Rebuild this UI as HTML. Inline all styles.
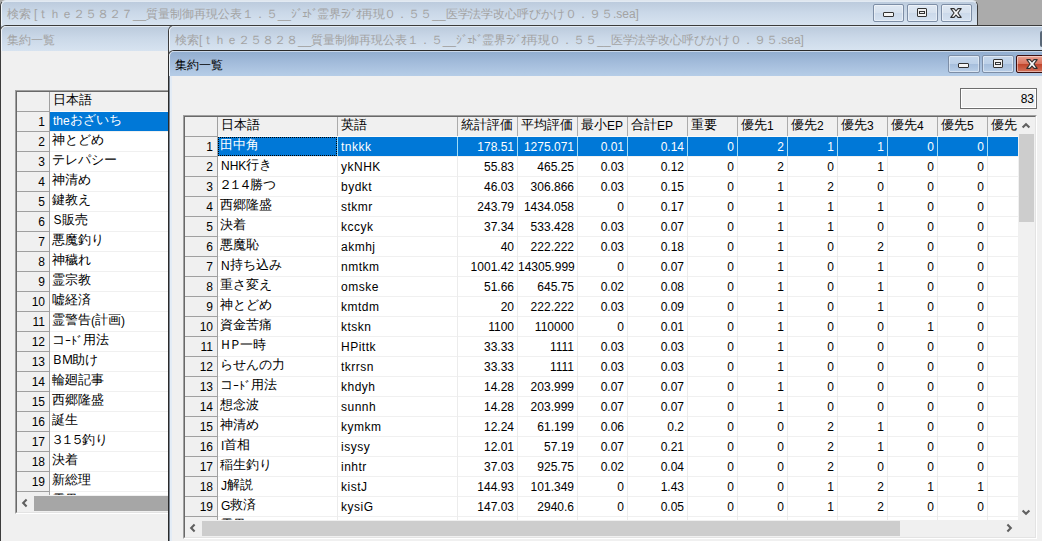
<!DOCTYPE html><html lang="ja"><head><meta charset="utf-8"><style>
*{box-sizing:border-box;margin:0;padding:0}
html,body{width:1042px;height:541px;overflow:hidden;background:#ababab;font-family:"Liberation Sans",sans-serif;font-size:12px;color:#000}
.a{position:absolute}
.tb-in{background:linear-gradient(#bccbdd,#cad8e8 45%,#d7e3f0);border-top:1px solid #e2eaf3}
.tb-act{background:linear-gradient(#92aed0,#a3bcdb 45%,#b6cde7);border-top:1px solid #c9d8ea}
.ttl{position:absolute;white-space:nowrap;font-size:12px;line-height:14px;letter-spacing:-0.04px}
.btn{position:absolute;border:1px solid #7d8ea6;border-radius:2px;box-shadow:inset 0 0 0 1px rgba(255,255,255,.45)}
.bi{background:linear-gradient(#dfe8f3,#d6e1ee 50%,#cbd9ea 51%,#d5e2f1)}
.ba{background:linear-gradient(#c5d7ec,#bcd0e8 50%,#a6bedc 51%,#b9cfe8)}
.bc{background:linear-gradient(#e8a090,#d8735e 50%,#c0442b 51%,#d2735c);border-color:#3c0f0f}
.c{position:absolute;white-space:nowrap;overflow:hidden;height:19px;line-height:19px;padding:0 2px 0 2px}
.r{text-align:right;padding:0 3px 0 0}
.rh{text-align:right;padding:1px 4px 0 0}
.vl{position:absolute;width:1px}
.hk{letter-spacing:-1.4px}
.fw{letter-spacing:-1.5px;margin-left:-1.5px}
.j{font-size:13px;line-height:0;position:relative;top:-1px;font-weight:500}
.hl{position:absolute;height:1px}
</style></head><body><div class="a" style="left:0;top:0;width:978px;height:541px;background:#dae6f3;border:1px solid #3c3c3c;border-top-color:#dfe6ee;border-radius:6px 6px 0 0"></div><div class="a tb-in" style="left:1px;top:1px;width:976px;height:24px;border-radius:5px 5px 0 0;border-left:1px solid #f2f6fb"></div><div class="ttl" style="left:7px;top:7px;color:#a3a3a3">検索<span style="margin-left:3px">[</span>ｔｈｅ２５８２７__質量制御再現公表１．５__<span class=hk>ｼﾞｪﾄﾞ</span>霊界<span class=hk>ﾗｼﾞｵ</span>再現０．５５__医学法学改心呼びかけ０．９５.sea]</div><div class="btn bi" style="left:873px;top:4px;width:31px;height:18px"></div><div class="a" style="left:883px;top:12px;width:11px;height:5px;background:#f4f4f4;border:1px solid #333;border-radius:1px"></div><div class="btn bi" style="left:907px;top:4px;width:31px;height:18px"></div><div class="a" style="left:917px;top:8px;width:10px;height:9px;background:#f0f0f0;border:1px solid #333;border-radius:1px"></div><div class="a" style="left:919px;top:11px;width:6px;height:3px;border:1px solid #333"></div><div class="btn bi" style="left:941px;top:4px;width:31px;height:18px"></div><svg class="a" style="left:949px;top:7px" width="14" height="12" viewBox="0 0 14 12"><path d="M1.8 1.6 L5 1.6 L7 4 L9 1.6 L12.2 1.6 L8.9 6 L12.2 10.4 L9 10.4 L7 8 L5 10.4 L1.8 10.4 L5.1 6 Z" fill="#f8f8f8" stroke="#2e2e2e" stroke-width="1.1" stroke-linejoin="round"/></svg><div class="a" style="left:0;top:25px;width:180px;height:516px;background:#f0f0f0;border-top:1px solid #3c3c3c;border-left:1px solid #3c3c3c;border-radius:6px 0 0 0"></div><div class="a tb-in" style="left:1px;top:26px;width:179px;height:25px;border-radius:5px 0 0 0;border-left:1px solid #f2f6fb"></div><div class="ttl" style="left:7px;top:33px;color:#a3a3a3">集約一覧</div><div class="a" style="left:15px;top:90px;width:200px;height:424px;border-top:1px solid #a0a0a0;border-left:1px solid #a0a0a0;border-right:1px solid #fff;border-bottom:1px solid #fff"></div><div class="a" style="left:16px;top:91px;width:198px;height:422px;border-top:1px solid #696969;border-left:1px solid #696969;border-right:1px solid #e3e3e3;border-bottom:1px solid #e3e3e3;background:#f0f0f0"></div><div class="a" style="left:17px;top:92px;width:196px;height:403px;overflow:hidden;background:#fff"><div class="a" style="left:0;top:0;width:196px;height:19px;background:#f0f0f0"></div><div class="a" style="left:0;top:0;width:32px;height:403px;background:#f0f0f0"></div><div class="a" style="left:33px;top:20px;width:163px;height:19px;background:#0078d7"></div><div class="hl" style="left:33px;top:19px;width:163px;background:#fafafa"></div><div class="hl" style="left:0;top:19px;width:33px;background:#a0a0a0"></div><div class="hl" style="left:33px;top:39px;width:163px;background:#f0f0f0"></div><div class="hl" style="left:0;top:39px;width:33px;background:#a0a0a0"></div><div class="hl" style="left:33px;top:59px;width:163px;background:#f0f0f0"></div><div class="hl" style="left:0;top:59px;width:33px;background:#a0a0a0"></div><div class="hl" style="left:33px;top:79px;width:163px;background:#f0f0f0"></div><div class="hl" style="left:0;top:79px;width:33px;background:#a0a0a0"></div><div class="hl" style="left:33px;top:99px;width:163px;background:#f0f0f0"></div><div class="hl" style="left:0;top:99px;width:33px;background:#a0a0a0"></div><div class="hl" style="left:33px;top:119px;width:163px;background:#f0f0f0"></div><div class="hl" style="left:0;top:119px;width:33px;background:#a0a0a0"></div><div class="hl" style="left:33px;top:139px;width:163px;background:#f0f0f0"></div><div class="hl" style="left:0;top:139px;width:33px;background:#a0a0a0"></div><div class="hl" style="left:33px;top:159px;width:163px;background:#f0f0f0"></div><div class="hl" style="left:0;top:159px;width:33px;background:#a0a0a0"></div><div class="hl" style="left:33px;top:179px;width:163px;background:#f0f0f0"></div><div class="hl" style="left:0;top:179px;width:33px;background:#a0a0a0"></div><div class="hl" style="left:33px;top:199px;width:163px;background:#f0f0f0"></div><div class="hl" style="left:0;top:199px;width:33px;background:#a0a0a0"></div><div class="hl" style="left:33px;top:219px;width:163px;background:#f0f0f0"></div><div class="hl" style="left:0;top:219px;width:33px;background:#a0a0a0"></div><div class="hl" style="left:33px;top:239px;width:163px;background:#f0f0f0"></div><div class="hl" style="left:0;top:239px;width:33px;background:#a0a0a0"></div><div class="hl" style="left:33px;top:259px;width:163px;background:#f0f0f0"></div><div class="hl" style="left:0;top:259px;width:33px;background:#a0a0a0"></div><div class="hl" style="left:33px;top:279px;width:163px;background:#f0f0f0"></div><div class="hl" style="left:0;top:279px;width:33px;background:#a0a0a0"></div><div class="hl" style="left:33px;top:299px;width:163px;background:#f0f0f0"></div><div class="hl" style="left:0;top:299px;width:33px;background:#a0a0a0"></div><div class="hl" style="left:33px;top:319px;width:163px;background:#f0f0f0"></div><div class="hl" style="left:0;top:319px;width:33px;background:#a0a0a0"></div><div class="hl" style="left:33px;top:339px;width:163px;background:#f0f0f0"></div><div class="hl" style="left:0;top:339px;width:33px;background:#a0a0a0"></div><div class="hl" style="left:33px;top:359px;width:163px;background:#f0f0f0"></div><div class="hl" style="left:0;top:359px;width:33px;background:#a0a0a0"></div><div class="hl" style="left:33px;top:379px;width:163px;background:#f0f0f0"></div><div class="hl" style="left:0;top:379px;width:33px;background:#a0a0a0"></div><div class="hl" style="left:33px;top:399px;width:163px;background:#f0f0f0"></div><div class="hl" style="left:0;top:399px;width:33px;background:#a0a0a0"></div><div class="hl" style="left:33px;top:419px;width:163px;background:#f0f0f0"></div><div class="hl" style="left:0;top:419px;width:33px;background:#a0a0a0"></div><div class="hl" style="left:33px;top:439px;width:163px;background:#f0f0f0"></div><div class="hl" style="left:0;top:439px;width:33px;background:#a0a0a0"></div><div class="vl" style="left:32px;top:0;height:403px;background:#a0a0a0"></div><div class="c" style="left:33px;top:0;width:362px;padding-left:3px"><span class="j">日本語</span></div><div class="c rh" style="left:0;top:20px;width:32px">1</div><div class="c" style="left:33px;top:20px;width:362px;color:#fff;padding-left:3px;">the<span class="j">おざいち</span></div><div class="c rh" style="left:0;top:40px;width:32px">2</div><div class="c" style="left:33px;top:40px;width:362px;color:#000;"><span class="j">神とどめ</span></div><div class="c rh" style="left:0;top:60px;width:32px">3</div><div class="c" style="left:33px;top:60px;width:362px;color:#000;"><span class="j">テレパシー</span></div><div class="c rh" style="left:0;top:80px;width:32px">4</div><div class="c" style="left:33px;top:80px;width:362px;color:#000;"><span class="j">神清め</span></div><div class="c rh" style="left:0;top:100px;width:32px">5</div><div class="c" style="left:33px;top:100px;width:362px;color:#000;"><span class="j">鍵教え</span></div><div class="c rh" style="left:0;top:120px;width:32px">6</div><div class="c" style="left:33px;top:120px;width:362px;color:#000;"><span class="j fw">Ｓ</span><span class="j">販売</span></div><div class="c rh" style="left:0;top:140px;width:32px">7</div><div class="c" style="left:33px;top:140px;width:362px;color:#000;"><span class="j">悪魔釣り</span></div><div class="c rh" style="left:0;top:160px;width:32px">8</div><div class="c" style="left:33px;top:160px;width:362px;color:#000;"><span class="j">神穢れ</span></div><div class="c rh" style="left:0;top:180px;width:32px">9</div><div class="c" style="left:33px;top:180px;width:362px;color:#000;"><span class="j">霊宗教</span></div><div class="c rh" style="left:0;top:200px;width:32px">10</div><div class="c" style="left:33px;top:200px;width:362px;color:#000;"><span class="j">嘘経済</span></div><div class="c rh" style="left:0;top:220px;width:32px">11</div><div class="c" style="left:33px;top:220px;width:362px;color:#000;"><span class="j">霊警告</span>(<span class="j">計画</span>)</div><div class="c rh" style="left:0;top:240px;width:32px">12</div><div class="c" style="left:33px;top:240px;width:362px;color:#000;"><span class="j">コ</span>ｰﾄﾞ<span class="j">用法</span></div><div class="c rh" style="left:0;top:260px;width:32px">13</div><div class="c" style="left:33px;top:260px;width:362px;color:#000;"><span class="j fw">Ｂ</span><span class="j fw">Ｍ</span><span class="j">助け</span></div><div class="c rh" style="left:0;top:280px;width:32px">14</div><div class="c" style="left:33px;top:280px;width:362px;color:#000;"><span class="j">輪廻記事</span></div><div class="c rh" style="left:0;top:300px;width:32px">15</div><div class="c" style="left:33px;top:300px;width:362px;color:#000;"><span class="j">西郷隆盛</span></div><div class="c rh" style="left:0;top:320px;width:32px">16</div><div class="c" style="left:33px;top:320px;width:362px;color:#000;"><span class="j">誕生</span></div><div class="c rh" style="left:0;top:340px;width:32px">17</div><div class="c" style="left:33px;top:340px;width:362px;color:#000;"><span class="j fw">３</span><span class="j fw">１</span><span class="j fw">５</span><span class="j">釣り</span></div><div class="c rh" style="left:0;top:360px;width:32px">18</div><div class="c" style="left:33px;top:360px;width:362px;color:#000;"><span class="j">決着</span></div><div class="c rh" style="left:0;top:380px;width:32px">19</div><div class="c" style="left:33px;top:380px;width:362px;color:#000;"><span class="j">新総理</span></div><div class="c rh" style="left:0;top:400px;width:32px">20</div><div class="c" style="left:33px;top:400px;width:362px;color:#000;"><span class="j">霊界</span></div></div><div class="a" style="left:17px;top:495px;width:196px;height:17px;background:#f0f0f0"></div><svg class="a" style="left:20px;top:498px" width="10" height="10" viewBox="0 0 10 10"><path d="M6.6 1.6 L3.2 5 L6.6 8.4" fill="none" stroke="#606060" stroke-width="2.1"/></svg><div class="a" style="left:34px;top:496px;width:400px;height:15px;background:#a6a6a6"></div><div class="a" style="left:168px;top:25px;width:900px;height:516px;background:#dae6f3;border-top:1px solid #3c3c3c;border-left:1px solid #3c3c3c;border-radius:6px 0 0 0"></div><div class="a tb-in" style="left:169px;top:26px;width:900px;height:24px;border-radius:5px 0 0 0;border-left:1px solid #f2f6fb"></div><div class="ttl" style="left:175px;top:33px;color:#a3a3a3">検索[ｔｈｅ２５８２８__質量制御再現公表１．５__<span class=hk>ｼﾞｪﾄﾞ</span>霊界<span class=hk>ﾗｼﾞｵ</span>再現０．５５__医学法学改心呼びかけ０．９５.sea]</div><div class="a" style="left:1040px;top:31px;width:2px;height:16px;background:#5a6878;border-radius:2px 0 0 2px"></div><div class="a" style="left:168px;top:50px;width:900px;height:491px;background:#f0f0f0;border-top:1px solid #2a2a2a;border-left:1px solid #2a2a2a;border-radius:6px 0 0 0"></div><div class="a tb-act" style="left:169px;top:51px;width:900px;height:25px;border-radius:5px 0 0 0;border-left:1px solid #eaf1f9"></div><div class="a" style="left:169px;top:76px;width:3px;height:465px;background:linear-gradient(90deg,#7d8794 0 1px,#e3ecf6 1px)"></div><div class="ttl" style="left:175px;top:58px;color:#000">集約一覧</div><div class="btn ba" style="left:948px;top:55px;width:32px;height:18px"></div><div class="a" style="left:958px;top:63px;width:11px;height:5px;background:#f4f4f4;border:1px solid #333;border-radius:1px"></div><div class="btn ba" style="left:982px;top:55px;width:32px;height:18px"></div><div class="a" style="left:993px;top:59px;width:10px;height:9px;background:#f0f0f0;border:1px solid #333;border-radius:1px"></div><div class="a" style="left:995px;top:62px;width:6px;height:3px;border:1px solid #333"></div><div class="btn bc" style="left:1016px;top:55px;width:32px;height:18px"></div><svg class="a" style="left:1025px;top:58px" width="14" height="12" viewBox="0 0 14 12"><path d="M1.8 1.6 L5 1.6 L7 4 L9 1.6 L12.2 1.6 L8.9 6 L12.2 10.4 L9 10.4 L7 8 L5 10.4 L1.8 10.4 L5.1 6 Z" fill="#f8f8f8" stroke="#2e2e2e" stroke-width="1.1" stroke-linejoin="round"/></svg><div class="a" style="left:960px;top:88px;width:77px;height:21px;border:1px solid #6d6d6d;background:#f0f0f0"><div class="a" style="left:0;top:0;right:0;bottom:0;border:1px solid #fff;text-align:right;padding-right:1px;line-height:19px">83</div></div><div class="a" style="left:183px;top:115px;width:854px;height:424px;border-top:1px solid #a0a0a0;border-left:1px solid #a0a0a0;border-right:1px solid #fff;border-bottom:1px solid #fff"></div><div class="a" style="left:184px;top:116px;width:852px;height:422px;border-top:1px solid #696969;border-left:1px solid #696969;border-right:1px solid #e3e3e3;border-bottom:1px solid #e3e3e3;background:#f0f0f0"></div><div class="a" style="left:185px;top:117px;width:833px;height:403px;overflow:hidden;background:#fff"><div class="a" style="left:0;top:0;width:833px;height:19px;background:#f0f0f0"></div><div class="a" style="left:0;top:0;width:32px;height:403px;background:#f0f0f0"></div><div class="a" style="left:33px;top:20px;width:800px;height:19px;background:#0078d7"></div><div class="hl" style="left:33px;top:19px;width:800px;background:#fafafa"></div><div class="hl" style="left:0;top:19px;width:33px;background:#a0a0a0"></div><div class="hl" style="left:33px;top:39px;width:800px;background:#f0f0f0"></div><div class="hl" style="left:0;top:39px;width:33px;background:#a0a0a0"></div><div class="hl" style="left:33px;top:59px;width:800px;background:#f0f0f0"></div><div class="hl" style="left:0;top:59px;width:33px;background:#a0a0a0"></div><div class="hl" style="left:33px;top:79px;width:800px;background:#f0f0f0"></div><div class="hl" style="left:0;top:79px;width:33px;background:#a0a0a0"></div><div class="hl" style="left:33px;top:99px;width:800px;background:#f0f0f0"></div><div class="hl" style="left:0;top:99px;width:33px;background:#a0a0a0"></div><div class="hl" style="left:33px;top:119px;width:800px;background:#f0f0f0"></div><div class="hl" style="left:0;top:119px;width:33px;background:#a0a0a0"></div><div class="hl" style="left:33px;top:139px;width:800px;background:#f0f0f0"></div><div class="hl" style="left:0;top:139px;width:33px;background:#a0a0a0"></div><div class="hl" style="left:33px;top:159px;width:800px;background:#f0f0f0"></div><div class="hl" style="left:0;top:159px;width:33px;background:#a0a0a0"></div><div class="hl" style="left:33px;top:179px;width:800px;background:#f0f0f0"></div><div class="hl" style="left:0;top:179px;width:33px;background:#a0a0a0"></div><div class="hl" style="left:33px;top:199px;width:800px;background:#f0f0f0"></div><div class="hl" style="left:0;top:199px;width:33px;background:#a0a0a0"></div><div class="hl" style="left:33px;top:219px;width:800px;background:#f0f0f0"></div><div class="hl" style="left:0;top:219px;width:33px;background:#a0a0a0"></div><div class="hl" style="left:33px;top:239px;width:800px;background:#f0f0f0"></div><div class="hl" style="left:0;top:239px;width:33px;background:#a0a0a0"></div><div class="hl" style="left:33px;top:259px;width:800px;background:#f0f0f0"></div><div class="hl" style="left:0;top:259px;width:33px;background:#a0a0a0"></div><div class="hl" style="left:33px;top:279px;width:800px;background:#f0f0f0"></div><div class="hl" style="left:0;top:279px;width:33px;background:#a0a0a0"></div><div class="hl" style="left:33px;top:299px;width:800px;background:#f0f0f0"></div><div class="hl" style="left:0;top:299px;width:33px;background:#a0a0a0"></div><div class="hl" style="left:33px;top:319px;width:800px;background:#f0f0f0"></div><div class="hl" style="left:0;top:319px;width:33px;background:#a0a0a0"></div><div class="hl" style="left:33px;top:339px;width:800px;background:#f0f0f0"></div><div class="hl" style="left:0;top:339px;width:33px;background:#a0a0a0"></div><div class="hl" style="left:33px;top:359px;width:800px;background:#f0f0f0"></div><div class="hl" style="left:0;top:359px;width:33px;background:#a0a0a0"></div><div class="hl" style="left:33px;top:379px;width:800px;background:#f0f0f0"></div><div class="hl" style="left:0;top:379px;width:33px;background:#a0a0a0"></div><div class="hl" style="left:33px;top:399px;width:800px;background:#f0f0f0"></div><div class="hl" style="left:0;top:399px;width:33px;background:#a0a0a0"></div><div class="hl" style="left:33px;top:419px;width:800px;background:#f0f0f0"></div><div class="hl" style="left:0;top:419px;width:33px;background:#a0a0a0"></div><div class="hl" style="left:33px;top:439px;width:800px;background:#f0f0f0"></div><div class="hl" style="left:0;top:439px;width:33px;background:#a0a0a0"></div><div class="vl" style="left:32px;top:0;height:403px;background:#a0a0a0"></div><div class="vl" style="left:152px;top:0;height:19px;background:#ababab"></div><div class="vl" style="left:152px;top:20px;height:19px;background:#9fdcf6"></div><div class="vl" style="left:152px;top:39px;height:403px;background:#ececec"></div><div class="vl" style="left:272px;top:0;height:19px;background:#ababab"></div><div class="vl" style="left:272px;top:20px;height:19px;background:#9fdcf6"></div><div class="vl" style="left:272px;top:39px;height:403px;background:#ececec"></div><div class="vl" style="left:332px;top:0;height:19px;background:#ababab"></div><div class="vl" style="left:332px;top:20px;height:19px;background:#9fdcf6"></div><div class="vl" style="left:332px;top:39px;height:403px;background:#ececec"></div><div class="vl" style="left:392px;top:0;height:19px;background:#ababab"></div><div class="vl" style="left:392px;top:20px;height:19px;background:#9fdcf6"></div><div class="vl" style="left:392px;top:39px;height:403px;background:#ececec"></div><div class="vl" style="left:442px;top:0;height:19px;background:#ababab"></div><div class="vl" style="left:442px;top:20px;height:19px;background:#9fdcf6"></div><div class="vl" style="left:442px;top:39px;height:403px;background:#ececec"></div><div class="vl" style="left:502px;top:0;height:19px;background:#ababab"></div><div class="vl" style="left:502px;top:20px;height:19px;background:#9fdcf6"></div><div class="vl" style="left:502px;top:39px;height:403px;background:#ececec"></div><div class="vl" style="left:552px;top:0;height:19px;background:#ababab"></div><div class="vl" style="left:552px;top:20px;height:19px;background:#9fdcf6"></div><div class="vl" style="left:552px;top:39px;height:403px;background:#ececec"></div><div class="vl" style="left:602px;top:0;height:19px;background:#ababab"></div><div class="vl" style="left:602px;top:20px;height:19px;background:#9fdcf6"></div><div class="vl" style="left:602px;top:39px;height:403px;background:#ececec"></div><div class="vl" style="left:652px;top:0;height:19px;background:#ababab"></div><div class="vl" style="left:652px;top:20px;height:19px;background:#9fdcf6"></div><div class="vl" style="left:652px;top:39px;height:403px;background:#ececec"></div><div class="vl" style="left:702px;top:0;height:19px;background:#ababab"></div><div class="vl" style="left:702px;top:20px;height:19px;background:#9fdcf6"></div><div class="vl" style="left:702px;top:39px;height:403px;background:#ececec"></div><div class="vl" style="left:752px;top:0;height:19px;background:#ababab"></div><div class="vl" style="left:752px;top:20px;height:19px;background:#9fdcf6"></div><div class="vl" style="left:752px;top:39px;height:403px;background:#ececec"></div><div class="vl" style="left:802px;top:0;height:19px;background:#ababab"></div><div class="vl" style="left:802px;top:20px;height:19px;background:#9fdcf6"></div><div class="vl" style="left:802px;top:39px;height:403px;background:#ececec"></div><div class="c" style="left:33px;top:0;width:119px;padding-left:3px"><span class="j">日本語</span></div><div class="c" style="left:153px;top:0;width:119px;padding-left:3px"><span class="j">英語</span></div><div class="c" style="left:273px;top:0;width:59px;padding-left:3px"><span class="j">統計評価</span></div><div class="c" style="left:333px;top:0;width:59px;padding-left:3px"><span class="j">平均評価</span></div><div class="c" style="left:393px;top:0;width:49px;padding-left:3px"><span class="j">最小</span>EP</div><div class="c" style="left:443px;top:0;width:59px;padding-left:3px"><span class="j">合計</span>EP</div><div class="c" style="left:503px;top:0;width:49px;padding-left:3px"><span class="j">重要</span></div><div class="c" style="left:553px;top:0;width:49px;padding-left:3px"><span class="j">優先</span>1</div><div class="c" style="left:603px;top:0;width:49px;padding-left:3px"><span class="j">優先</span>2</div><div class="c" style="left:653px;top:0;width:49px;padding-left:3px"><span class="j">優先</span>3</div><div class="c" style="left:703px;top:0;width:49px;padding-left:3px"><span class="j">優先</span>4</div><div class="c" style="left:753px;top:0;width:49px;padding-left:3px"><span class="j">優先</span>5</div><div class="c" style="left:803px;top:0;width:229px;padding-left:3px"><span class="j">優先</span></div><div class="c rh" style="left:0;top:20px;width:32px">1</div><div class="c" style="left:33px;top:20px;width:119px;color:#fff;"><span class="j">田中角</span></div><div class="c" style="left:153px;top:20px;width:119px;color:#fff;padding-left:3px;letter-spacing:0.5px;padding-top:1px;">tnkkk</div><div class="c r" style="left:273px;top:20px;width:59px;color:#fff;padding-top:1px;">178.51</div><div class="c r" style="left:333px;top:20px;width:59px;color:#fff;padding-top:1px;">1275.071</div><div class="c r" style="left:393px;top:20px;width:49px;color:#fff;padding-top:1px;">0.01</div><div class="c r" style="left:443px;top:20px;width:59px;color:#fff;padding-top:1px;">0.14</div><div class="c r" style="left:503px;top:20px;width:49px;color:#fff;padding-top:1px;">0</div><div class="c r" style="left:553px;top:20px;width:49px;color:#fff;padding-top:1px;">2</div><div class="c r" style="left:603px;top:20px;width:49px;color:#fff;padding-top:1px;">1</div><div class="c r" style="left:653px;top:20px;width:49px;color:#fff;padding-top:1px;">1</div><div class="c r" style="left:703px;top:20px;width:49px;color:#fff;padding-top:1px;">0</div><div class="c r" style="left:753px;top:20px;width:49px;color:#fff;padding-top:1px;">0</div><div class="c r" style="left:803px;top:20px;width:229px;color:#fff;padding-top:1px;"></div><div class="c rh" style="left:0;top:40px;width:32px">2</div><div class="c" style="left:33px;top:40px;width:119px;color:#000;padding-left:3px;">NHK<span class="j">行き</span></div><div class="c" style="left:153px;top:40px;width:119px;color:#000;padding-left:3px;letter-spacing:0.5px;padding-top:1px;">ykNHK</div><div class="c r" style="left:273px;top:40px;width:59px;color:#000;padding-top:1px;">55.83</div><div class="c r" style="left:333px;top:40px;width:59px;color:#000;padding-top:1px;">465.25</div><div class="c r" style="left:393px;top:40px;width:49px;color:#000;padding-top:1px;">0.03</div><div class="c r" style="left:443px;top:40px;width:59px;color:#000;padding-top:1px;">0.12</div><div class="c r" style="left:503px;top:40px;width:49px;color:#000;padding-top:1px;">0</div><div class="c r" style="left:553px;top:40px;width:49px;color:#000;padding-top:1px;">2</div><div class="c r" style="left:603px;top:40px;width:49px;color:#000;padding-top:1px;">0</div><div class="c r" style="left:653px;top:40px;width:49px;color:#000;padding-top:1px;">1</div><div class="c r" style="left:703px;top:40px;width:49px;color:#000;padding-top:1px;">0</div><div class="c r" style="left:753px;top:40px;width:49px;color:#000;padding-top:1px;">0</div><div class="c r" style="left:803px;top:40px;width:229px;color:#000;padding-top:1px;"></div><div class="c rh" style="left:0;top:60px;width:32px">3</div><div class="c" style="left:33px;top:60px;width:119px;color:#000;"><span class="j fw">２</span><span class="j fw">１</span><span class="j fw">４</span><span class="j">勝つ</span></div><div class="c" style="left:153px;top:60px;width:119px;color:#000;padding-left:3px;letter-spacing:0.5px;padding-top:1px;">bydkt</div><div class="c r" style="left:273px;top:60px;width:59px;color:#000;padding-top:1px;">46.03</div><div class="c r" style="left:333px;top:60px;width:59px;color:#000;padding-top:1px;">306.866</div><div class="c r" style="left:393px;top:60px;width:49px;color:#000;padding-top:1px;">0.03</div><div class="c r" style="left:443px;top:60px;width:59px;color:#000;padding-top:1px;">0.15</div><div class="c r" style="left:503px;top:60px;width:49px;color:#000;padding-top:1px;">0</div><div class="c r" style="left:553px;top:60px;width:49px;color:#000;padding-top:1px;">1</div><div class="c r" style="left:603px;top:60px;width:49px;color:#000;padding-top:1px;">2</div><div class="c r" style="left:653px;top:60px;width:49px;color:#000;padding-top:1px;">0</div><div class="c r" style="left:703px;top:60px;width:49px;color:#000;padding-top:1px;">0</div><div class="c r" style="left:753px;top:60px;width:49px;color:#000;padding-top:1px;">0</div><div class="c r" style="left:803px;top:60px;width:229px;color:#000;padding-top:1px;"></div><div class="c rh" style="left:0;top:80px;width:32px">4</div><div class="c" style="left:33px;top:80px;width:119px;color:#000;"><span class="j">西郷隆盛</span></div><div class="c" style="left:153px;top:80px;width:119px;color:#000;padding-left:3px;letter-spacing:0.5px;padding-top:1px;">stkmr</div><div class="c r" style="left:273px;top:80px;width:59px;color:#000;padding-top:1px;">243.79</div><div class="c r" style="left:333px;top:80px;width:59px;color:#000;padding-top:1px;">1434.058</div><div class="c r" style="left:393px;top:80px;width:49px;color:#000;padding-top:1px;">0</div><div class="c r" style="left:443px;top:80px;width:59px;color:#000;padding-top:1px;">0.17</div><div class="c r" style="left:503px;top:80px;width:49px;color:#000;padding-top:1px;">0</div><div class="c r" style="left:553px;top:80px;width:49px;color:#000;padding-top:1px;">1</div><div class="c r" style="left:603px;top:80px;width:49px;color:#000;padding-top:1px;">1</div><div class="c r" style="left:653px;top:80px;width:49px;color:#000;padding-top:1px;">1</div><div class="c r" style="left:703px;top:80px;width:49px;color:#000;padding-top:1px;">0</div><div class="c r" style="left:753px;top:80px;width:49px;color:#000;padding-top:1px;">0</div><div class="c r" style="left:803px;top:80px;width:229px;color:#000;padding-top:1px;"></div><div class="c rh" style="left:0;top:100px;width:32px">5</div><div class="c" style="left:33px;top:100px;width:119px;color:#000;"><span class="j">決着</span></div><div class="c" style="left:153px;top:100px;width:119px;color:#000;padding-left:3px;letter-spacing:0.5px;padding-top:1px;">kccyk</div><div class="c r" style="left:273px;top:100px;width:59px;color:#000;padding-top:1px;">37.34</div><div class="c r" style="left:333px;top:100px;width:59px;color:#000;padding-top:1px;">533.428</div><div class="c r" style="left:393px;top:100px;width:49px;color:#000;padding-top:1px;">0.03</div><div class="c r" style="left:443px;top:100px;width:59px;color:#000;padding-top:1px;">0.07</div><div class="c r" style="left:503px;top:100px;width:49px;color:#000;padding-top:1px;">0</div><div class="c r" style="left:553px;top:100px;width:49px;color:#000;padding-top:1px;">1</div><div class="c r" style="left:603px;top:100px;width:49px;color:#000;padding-top:1px;">1</div><div class="c r" style="left:653px;top:100px;width:49px;color:#000;padding-top:1px;">0</div><div class="c r" style="left:703px;top:100px;width:49px;color:#000;padding-top:1px;">0</div><div class="c r" style="left:753px;top:100px;width:49px;color:#000;padding-top:1px;">0</div><div class="c r" style="left:803px;top:100px;width:229px;color:#000;padding-top:1px;"></div><div class="c rh" style="left:0;top:120px;width:32px">6</div><div class="c" style="left:33px;top:120px;width:119px;color:#000;"><span class="j">悪魔恥</span></div><div class="c" style="left:153px;top:120px;width:119px;color:#000;padding-left:3px;letter-spacing:0.5px;padding-top:1px;">akmhj</div><div class="c r" style="left:273px;top:120px;width:59px;color:#000;padding-top:1px;">40</div><div class="c r" style="left:333px;top:120px;width:59px;color:#000;padding-top:1px;">222.222</div><div class="c r" style="left:393px;top:120px;width:49px;color:#000;padding-top:1px;">0.03</div><div class="c r" style="left:443px;top:120px;width:59px;color:#000;padding-top:1px;">0.18</div><div class="c r" style="left:503px;top:120px;width:49px;color:#000;padding-top:1px;">0</div><div class="c r" style="left:553px;top:120px;width:49px;color:#000;padding-top:1px;">1</div><div class="c r" style="left:603px;top:120px;width:49px;color:#000;padding-top:1px;">0</div><div class="c r" style="left:653px;top:120px;width:49px;color:#000;padding-top:1px;">2</div><div class="c r" style="left:703px;top:120px;width:49px;color:#000;padding-top:1px;">0</div><div class="c r" style="left:753px;top:120px;width:49px;color:#000;padding-top:1px;">0</div><div class="c r" style="left:803px;top:120px;width:229px;color:#000;padding-top:1px;"></div><div class="c rh" style="left:0;top:140px;width:32px">7</div><div class="c" style="left:33px;top:140px;width:119px;color:#000;padding-left:3px;">N<span class="j">持ち込み</span></div><div class="c" style="left:153px;top:140px;width:119px;color:#000;padding-left:3px;letter-spacing:0.5px;padding-top:1px;">nmtkm</div><div class="c r" style="left:273px;top:140px;width:59px;color:#000;padding-top:1px;">1001.42</div><div class="c r" style="left:333px;top:140px;width:59px;color:#000;padding-top:1px;">14305.999</div><div class="c r" style="left:393px;top:140px;width:49px;color:#000;padding-top:1px;">0</div><div class="c r" style="left:443px;top:140px;width:59px;color:#000;padding-top:1px;">0.07</div><div class="c r" style="left:503px;top:140px;width:49px;color:#000;padding-top:1px;">0</div><div class="c r" style="left:553px;top:140px;width:49px;color:#000;padding-top:1px;">1</div><div class="c r" style="left:603px;top:140px;width:49px;color:#000;padding-top:1px;">0</div><div class="c r" style="left:653px;top:140px;width:49px;color:#000;padding-top:1px;">1</div><div class="c r" style="left:703px;top:140px;width:49px;color:#000;padding-top:1px;">0</div><div class="c r" style="left:753px;top:140px;width:49px;color:#000;padding-top:1px;">0</div><div class="c r" style="left:803px;top:140px;width:229px;color:#000;padding-top:1px;"></div><div class="c rh" style="left:0;top:160px;width:32px">8</div><div class="c" style="left:33px;top:160px;width:119px;color:#000;"><span class="j">重さ変え</span></div><div class="c" style="left:153px;top:160px;width:119px;color:#000;padding-left:3px;letter-spacing:0.5px;padding-top:1px;">omske</div><div class="c r" style="left:273px;top:160px;width:59px;color:#000;padding-top:1px;">51.66</div><div class="c r" style="left:333px;top:160px;width:59px;color:#000;padding-top:1px;">645.75</div><div class="c r" style="left:393px;top:160px;width:49px;color:#000;padding-top:1px;">0.02</div><div class="c r" style="left:443px;top:160px;width:59px;color:#000;padding-top:1px;">0.08</div><div class="c r" style="left:503px;top:160px;width:49px;color:#000;padding-top:1px;">0</div><div class="c r" style="left:553px;top:160px;width:49px;color:#000;padding-top:1px;">1</div><div class="c r" style="left:603px;top:160px;width:49px;color:#000;padding-top:1px;">0</div><div class="c r" style="left:653px;top:160px;width:49px;color:#000;padding-top:1px;">1</div><div class="c r" style="left:703px;top:160px;width:49px;color:#000;padding-top:1px;">0</div><div class="c r" style="left:753px;top:160px;width:49px;color:#000;padding-top:1px;">0</div><div class="c r" style="left:803px;top:160px;width:229px;color:#000;padding-top:1px;"></div><div class="c rh" style="left:0;top:180px;width:32px">9</div><div class="c" style="left:33px;top:180px;width:119px;color:#000;"><span class="j">神とどめ</span></div><div class="c" style="left:153px;top:180px;width:119px;color:#000;padding-left:3px;letter-spacing:0.5px;padding-top:1px;">kmtdm</div><div class="c r" style="left:273px;top:180px;width:59px;color:#000;padding-top:1px;">20</div><div class="c r" style="left:333px;top:180px;width:59px;color:#000;padding-top:1px;">222.222</div><div class="c r" style="left:393px;top:180px;width:49px;color:#000;padding-top:1px;">0.03</div><div class="c r" style="left:443px;top:180px;width:59px;color:#000;padding-top:1px;">0.09</div><div class="c r" style="left:503px;top:180px;width:49px;color:#000;padding-top:1px;">0</div><div class="c r" style="left:553px;top:180px;width:49px;color:#000;padding-top:1px;">1</div><div class="c r" style="left:603px;top:180px;width:49px;color:#000;padding-top:1px;">0</div><div class="c r" style="left:653px;top:180px;width:49px;color:#000;padding-top:1px;">1</div><div class="c r" style="left:703px;top:180px;width:49px;color:#000;padding-top:1px;">0</div><div class="c r" style="left:753px;top:180px;width:49px;color:#000;padding-top:1px;">0</div><div class="c r" style="left:803px;top:180px;width:229px;color:#000;padding-top:1px;"></div><div class="c rh" style="left:0;top:200px;width:32px">10</div><div class="c" style="left:33px;top:200px;width:119px;color:#000;"><span class="j">資金苦痛</span></div><div class="c" style="left:153px;top:200px;width:119px;color:#000;padding-left:3px;letter-spacing:0.5px;padding-top:1px;">ktskn</div><div class="c r" style="left:273px;top:200px;width:59px;color:#000;padding-top:1px;">1100</div><div class="c r" style="left:333px;top:200px;width:59px;color:#000;padding-top:1px;">110000</div><div class="c r" style="left:393px;top:200px;width:49px;color:#000;padding-top:1px;">0</div><div class="c r" style="left:443px;top:200px;width:59px;color:#000;padding-top:1px;">0.01</div><div class="c r" style="left:503px;top:200px;width:49px;color:#000;padding-top:1px;">0</div><div class="c r" style="left:553px;top:200px;width:49px;color:#000;padding-top:1px;">1</div><div class="c r" style="left:603px;top:200px;width:49px;color:#000;padding-top:1px;">0</div><div class="c r" style="left:653px;top:200px;width:49px;color:#000;padding-top:1px;">0</div><div class="c r" style="left:703px;top:200px;width:49px;color:#000;padding-top:1px;">1</div><div class="c r" style="left:753px;top:200px;width:49px;color:#000;padding-top:1px;">0</div><div class="c r" style="left:803px;top:200px;width:229px;color:#000;padding-top:1px;"></div><div class="c rh" style="left:0;top:220px;width:32px">11</div><div class="c" style="left:33px;top:220px;width:119px;color:#000;"><span class="j fw">Ｈ</span><span class="j fw">Ｐ</span><span class="j">一時</span></div><div class="c" style="left:153px;top:220px;width:119px;color:#000;padding-left:3px;letter-spacing:0.5px;padding-top:1px;">HPittk</div><div class="c r" style="left:273px;top:220px;width:59px;color:#000;padding-top:1px;">33.33</div><div class="c r" style="left:333px;top:220px;width:59px;color:#000;padding-top:1px;">1111</div><div class="c r" style="left:393px;top:220px;width:49px;color:#000;padding-top:1px;">0.03</div><div class="c r" style="left:443px;top:220px;width:59px;color:#000;padding-top:1px;">0.03</div><div class="c r" style="left:503px;top:220px;width:49px;color:#000;padding-top:1px;">0</div><div class="c r" style="left:553px;top:220px;width:49px;color:#000;padding-top:1px;">1</div><div class="c r" style="left:603px;top:220px;width:49px;color:#000;padding-top:1px;">0</div><div class="c r" style="left:653px;top:220px;width:49px;color:#000;padding-top:1px;">0</div><div class="c r" style="left:703px;top:220px;width:49px;color:#000;padding-top:1px;">0</div><div class="c r" style="left:753px;top:220px;width:49px;color:#000;padding-top:1px;">0</div><div class="c r" style="left:803px;top:220px;width:229px;color:#000;padding-top:1px;"></div><div class="c rh" style="left:0;top:240px;width:32px">12</div><div class="c" style="left:33px;top:240px;width:119px;color:#000;"><span class="j">らせんの力</span></div><div class="c" style="left:153px;top:240px;width:119px;color:#000;padding-left:3px;letter-spacing:0.5px;padding-top:1px;">tkrrsn</div><div class="c r" style="left:273px;top:240px;width:59px;color:#000;padding-top:1px;">33.33</div><div class="c r" style="left:333px;top:240px;width:59px;color:#000;padding-top:1px;">1111</div><div class="c r" style="left:393px;top:240px;width:49px;color:#000;padding-top:1px;">0.03</div><div class="c r" style="left:443px;top:240px;width:59px;color:#000;padding-top:1px;">0.03</div><div class="c r" style="left:503px;top:240px;width:49px;color:#000;padding-top:1px;">0</div><div class="c r" style="left:553px;top:240px;width:49px;color:#000;padding-top:1px;">1</div><div class="c r" style="left:603px;top:240px;width:49px;color:#000;padding-top:1px;">0</div><div class="c r" style="left:653px;top:240px;width:49px;color:#000;padding-top:1px;">0</div><div class="c r" style="left:703px;top:240px;width:49px;color:#000;padding-top:1px;">0</div><div class="c r" style="left:753px;top:240px;width:49px;color:#000;padding-top:1px;">0</div><div class="c r" style="left:803px;top:240px;width:229px;color:#000;padding-top:1px;"></div><div class="c rh" style="left:0;top:260px;width:32px">13</div><div class="c" style="left:33px;top:260px;width:119px;color:#000;"><span class="j">コ</span>ｰﾄﾞ<span class="j">用法</span></div><div class="c" style="left:153px;top:260px;width:119px;color:#000;padding-left:3px;letter-spacing:0.5px;padding-top:1px;">khdyh</div><div class="c r" style="left:273px;top:260px;width:59px;color:#000;padding-top:1px;">14.28</div><div class="c r" style="left:333px;top:260px;width:59px;color:#000;padding-top:1px;">203.999</div><div class="c r" style="left:393px;top:260px;width:49px;color:#000;padding-top:1px;">0.07</div><div class="c r" style="left:443px;top:260px;width:59px;color:#000;padding-top:1px;">0.07</div><div class="c r" style="left:503px;top:260px;width:49px;color:#000;padding-top:1px;">0</div><div class="c r" style="left:553px;top:260px;width:49px;color:#000;padding-top:1px;">1</div><div class="c r" style="left:603px;top:260px;width:49px;color:#000;padding-top:1px;">0</div><div class="c r" style="left:653px;top:260px;width:49px;color:#000;padding-top:1px;">0</div><div class="c r" style="left:703px;top:260px;width:49px;color:#000;padding-top:1px;">0</div><div class="c r" style="left:753px;top:260px;width:49px;color:#000;padding-top:1px;">0</div><div class="c r" style="left:803px;top:260px;width:229px;color:#000;padding-top:1px;"></div><div class="c rh" style="left:0;top:280px;width:32px">14</div><div class="c" style="left:33px;top:280px;width:119px;color:#000;"><span class="j">想念波</span></div><div class="c" style="left:153px;top:280px;width:119px;color:#000;padding-left:3px;letter-spacing:0.5px;padding-top:1px;">sunnh</div><div class="c r" style="left:273px;top:280px;width:59px;color:#000;padding-top:1px;">14.28</div><div class="c r" style="left:333px;top:280px;width:59px;color:#000;padding-top:1px;">203.999</div><div class="c r" style="left:393px;top:280px;width:49px;color:#000;padding-top:1px;">0.07</div><div class="c r" style="left:443px;top:280px;width:59px;color:#000;padding-top:1px;">0.07</div><div class="c r" style="left:503px;top:280px;width:49px;color:#000;padding-top:1px;">0</div><div class="c r" style="left:553px;top:280px;width:49px;color:#000;padding-top:1px;">1</div><div class="c r" style="left:603px;top:280px;width:49px;color:#000;padding-top:1px;">0</div><div class="c r" style="left:653px;top:280px;width:49px;color:#000;padding-top:1px;">0</div><div class="c r" style="left:703px;top:280px;width:49px;color:#000;padding-top:1px;">0</div><div class="c r" style="left:753px;top:280px;width:49px;color:#000;padding-top:1px;">0</div><div class="c r" style="left:803px;top:280px;width:229px;color:#000;padding-top:1px;"></div><div class="c rh" style="left:0;top:300px;width:32px">15</div><div class="c" style="left:33px;top:300px;width:119px;color:#000;"><span class="j">神清め</span></div><div class="c" style="left:153px;top:300px;width:119px;color:#000;padding-left:3px;letter-spacing:0.5px;padding-top:1px;">kymkm</div><div class="c r" style="left:273px;top:300px;width:59px;color:#000;padding-top:1px;">12.24</div><div class="c r" style="left:333px;top:300px;width:59px;color:#000;padding-top:1px;">61.199</div><div class="c r" style="left:393px;top:300px;width:49px;color:#000;padding-top:1px;">0.06</div><div class="c r" style="left:443px;top:300px;width:59px;color:#000;padding-top:1px;">0.2</div><div class="c r" style="left:503px;top:300px;width:49px;color:#000;padding-top:1px;">0</div><div class="c r" style="left:553px;top:300px;width:49px;color:#000;padding-top:1px;">0</div><div class="c r" style="left:603px;top:300px;width:49px;color:#000;padding-top:1px;">2</div><div class="c r" style="left:653px;top:300px;width:49px;color:#000;padding-top:1px;">1</div><div class="c r" style="left:703px;top:300px;width:49px;color:#000;padding-top:1px;">0</div><div class="c r" style="left:753px;top:300px;width:49px;color:#000;padding-top:1px;">0</div><div class="c r" style="left:803px;top:300px;width:229px;color:#000;padding-top:1px;"></div><div class="c rh" style="left:0;top:320px;width:32px">16</div><div class="c" style="left:33px;top:320px;width:119px;color:#000;padding-left:3px;">I<span class="j">首相</span></div><div class="c" style="left:153px;top:320px;width:119px;color:#000;padding-left:3px;letter-spacing:0.5px;padding-top:1px;">isysy</div><div class="c r" style="left:273px;top:320px;width:59px;color:#000;padding-top:1px;">12.01</div><div class="c r" style="left:333px;top:320px;width:59px;color:#000;padding-top:1px;">57.19</div><div class="c r" style="left:393px;top:320px;width:49px;color:#000;padding-top:1px;">0.07</div><div class="c r" style="left:443px;top:320px;width:59px;color:#000;padding-top:1px;">0.21</div><div class="c r" style="left:503px;top:320px;width:49px;color:#000;padding-top:1px;">0</div><div class="c r" style="left:553px;top:320px;width:49px;color:#000;padding-top:1px;">0</div><div class="c r" style="left:603px;top:320px;width:49px;color:#000;padding-top:1px;">2</div><div class="c r" style="left:653px;top:320px;width:49px;color:#000;padding-top:1px;">1</div><div class="c r" style="left:703px;top:320px;width:49px;color:#000;padding-top:1px;">0</div><div class="c r" style="left:753px;top:320px;width:49px;color:#000;padding-top:1px;">0</div><div class="c r" style="left:803px;top:320px;width:229px;color:#000;padding-top:1px;"></div><div class="c rh" style="left:0;top:340px;width:32px">17</div><div class="c" style="left:33px;top:340px;width:119px;color:#000;"><span class="j">稲生釣り</span></div><div class="c" style="left:153px;top:340px;width:119px;color:#000;padding-left:3px;letter-spacing:0.5px;padding-top:1px;">inhtr</div><div class="c r" style="left:273px;top:340px;width:59px;color:#000;padding-top:1px;">37.03</div><div class="c r" style="left:333px;top:340px;width:59px;color:#000;padding-top:1px;">925.75</div><div class="c r" style="left:393px;top:340px;width:49px;color:#000;padding-top:1px;">0.02</div><div class="c r" style="left:443px;top:340px;width:59px;color:#000;padding-top:1px;">0.04</div><div class="c r" style="left:503px;top:340px;width:49px;color:#000;padding-top:1px;">0</div><div class="c r" style="left:553px;top:340px;width:49px;color:#000;padding-top:1px;">0</div><div class="c r" style="left:603px;top:340px;width:49px;color:#000;padding-top:1px;">2</div><div class="c r" style="left:653px;top:340px;width:49px;color:#000;padding-top:1px;">0</div><div class="c r" style="left:703px;top:340px;width:49px;color:#000;padding-top:1px;">0</div><div class="c r" style="left:753px;top:340px;width:49px;color:#000;padding-top:1px;">0</div><div class="c r" style="left:803px;top:340px;width:229px;color:#000;padding-top:1px;"></div><div class="c rh" style="left:0;top:360px;width:32px">18</div><div class="c" style="left:33px;top:360px;width:119px;color:#000;padding-left:3px;">J<span class="j">解説</span></div><div class="c" style="left:153px;top:360px;width:119px;color:#000;padding-left:3px;letter-spacing:0.5px;padding-top:1px;">kistJ</div><div class="c r" style="left:273px;top:360px;width:59px;color:#000;padding-top:1px;">144.93</div><div class="c r" style="left:333px;top:360px;width:59px;color:#000;padding-top:1px;">101.349</div><div class="c r" style="left:393px;top:360px;width:49px;color:#000;padding-top:1px;">0</div><div class="c r" style="left:443px;top:360px;width:59px;color:#000;padding-top:1px;">1.43</div><div class="c r" style="left:503px;top:360px;width:49px;color:#000;padding-top:1px;">0</div><div class="c r" style="left:553px;top:360px;width:49px;color:#000;padding-top:1px;">0</div><div class="c r" style="left:603px;top:360px;width:49px;color:#000;padding-top:1px;">1</div><div class="c r" style="left:653px;top:360px;width:49px;color:#000;padding-top:1px;">2</div><div class="c r" style="left:703px;top:360px;width:49px;color:#000;padding-top:1px;">1</div><div class="c r" style="left:753px;top:360px;width:49px;color:#000;padding-top:1px;">1</div><div class="c r" style="left:803px;top:360px;width:229px;color:#000;padding-top:1px;"></div><div class="c rh" style="left:0;top:380px;width:32px">19</div><div class="c" style="left:33px;top:380px;width:119px;color:#000;padding-left:3px;">G<span class="j">救済</span></div><div class="c" style="left:153px;top:380px;width:119px;color:#000;padding-left:3px;letter-spacing:0.5px;padding-top:1px;">kysiG</div><div class="c r" style="left:273px;top:380px;width:59px;color:#000;padding-top:1px;">147.03</div><div class="c r" style="left:333px;top:380px;width:59px;color:#000;padding-top:1px;">2940.6</div><div class="c r" style="left:393px;top:380px;width:49px;color:#000;padding-top:1px;">0</div><div class="c r" style="left:443px;top:380px;width:59px;color:#000;padding-top:1px;">0.05</div><div class="c r" style="left:503px;top:380px;width:49px;color:#000;padding-top:1px;">0</div><div class="c r" style="left:553px;top:380px;width:49px;color:#000;padding-top:1px;">0</div><div class="c r" style="left:603px;top:380px;width:49px;color:#000;padding-top:1px;">1</div><div class="c r" style="left:653px;top:380px;width:49px;color:#000;padding-top:1px;">2</div><div class="c r" style="left:703px;top:380px;width:49px;color:#000;padding-top:1px;">0</div><div class="c r" style="left:753px;top:380px;width:49px;color:#000;padding-top:1px;">0</div><div class="c r" style="left:803px;top:380px;width:229px;color:#000;padding-top:1px;"></div><div class="c rh" style="left:0;top:400px;width:32px">20</div><div class="c" style="left:33px;top:400px;width:119px;color:#000;"><span class="j">霊界</span></div><div class="c" style="left:153px;top:400px;width:119px;color:#000;padding-left:3px;letter-spacing:0.5px;padding-top:1px;">ssss</div><div class="c r" style="left:273px;top:400px;width:59px;color:#000;padding-top:1px;"></div><div class="c r" style="left:333px;top:400px;width:59px;color:#000;padding-top:1px;"></div><div class="c r" style="left:393px;top:400px;width:49px;color:#000;padding-top:1px;"></div><div class="c r" style="left:443px;top:400px;width:59px;color:#000;padding-top:1px;"></div><div class="c r" style="left:503px;top:400px;width:49px;color:#000;padding-top:1px;"></div><div class="c r" style="left:553px;top:400px;width:49px;color:#000;padding-top:1px;"></div><div class="c r" style="left:603px;top:400px;width:49px;color:#000;padding-top:1px;"></div><div class="c r" style="left:653px;top:400px;width:49px;color:#000;padding-top:1px;"></div><div class="c r" style="left:703px;top:400px;width:49px;color:#000;padding-top:1px;"></div><div class="c r" style="left:753px;top:400px;width:49px;color:#000;padding-top:1px;"></div><div class="c r" style="left:803px;top:400px;width:229px;color:#000;padding-top:1px;"></div><div class="a" style="left:33px;top:20px;width:119px;height:19px;border:1px dotted #000"></div></div><div class="a" style="left:185px;top:520px;width:833px;height:17px;background:#f0f0f0"></div><svg class="a" style="left:188px;top:523px" width="10" height="10" viewBox="0 0 10 10"><path d="M6.6 1.6 L3.2 5 L6.6 8.4" fill="none" stroke="#606060" stroke-width="2.1"/></svg><div class="a" style="left:202px;top:521px;width:698px;height:15px;background:#cdcdcd"></div><div class="a" style="left:1018px;top:117px;width:17px;height:420px;background:#f0f0f0"></div><svg class="a" style="left:1021px;top:121px" width="10" height="10" viewBox="0 0 10 10"><path d="M1.6 6.6 L5 3.2 L8.4 6.6" fill="none" stroke="#606060" stroke-width="2.1"/></svg><svg class="a" style="left:1021px;top:507px" width="10" height="10" viewBox="0 0 10 10"><path d="M1.6 3.4 L5 6.8 L8.4 3.4" fill="none" stroke="#606060" stroke-width="2.1"/></svg><svg class="a" style="left:1004px;top:523px" width="10" height="10" viewBox="0 0 10 10"><path d="M3.4 1.6 L6.8 5 L3.4 8.4" fill="none" stroke="#606060" stroke-width="2.1"/></svg><div class="a" style="left:1019px;top:134px;width:15px;height:88px;background:#cdcdcd"></div></body></html>
